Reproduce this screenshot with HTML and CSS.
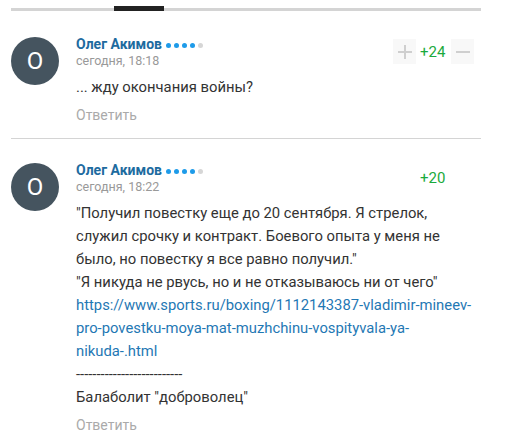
FILE: index.html
```html
<!DOCTYPE html>
<html lang="ru">
<head>
<meta charset="utf-8">
<link rel="stylesheet" href="styles.css">
</head>
<body>
<div class="wrap">
  <div class="tabs"><span class="tab-active"></span></div>

  <div class="comment">
    <div class="avatar">O</div>
    <div class="main">
      <div class="head">
        <div class="who">
          <div class="name-row">
            <span class="name">Олег Акимов</span>
            <span class="dots"><i class="on"></i><i class="on"></i><i class="on"></i><i class="on"></i><i></i></span>
          </div>
          <div class="date">сегодня, 18:18</div>
        </div>
        <div class="votes">
          <span class="vbtn"><svg width="14" height="14" viewBox="0 0 14 14"><path d="M7 0v14M0 7h14" stroke="#cfcfcf" stroke-width="2"/></svg></span>
          <span class="score">+24</span>
          <span class="vbtn"><svg width="14" height="14" viewBox="0 0 14 14"><path d="M0 7h14" stroke="#cfcfcf" stroke-width="2"/></svg></span>
        </div>
      </div>
      <div class="text">
        <p>... жду окончания войны?</p>
      </div>
      <div class="reply">Ответить</div>
    </div>
  </div>

  <div class="comment">
    <div class="avatar">O</div>
    <div class="main">
      <div class="head">
        <div class="who">
          <div class="name-row">
            <span class="name">Олег Акимов</span>
            <span class="dots"><i class="on"></i><i class="on"></i><i class="on"></i><i class="on"></i><i></i></span>
          </div>
          <div class="date">сегодня, 18:22</div>
        </div>
        <div class="votes">
          <span class="vbtn hidden"></span>
          <span class="score">+20</span>
          <span class="vbtn hidden"></span>
        </div>
      </div>
      <div class="text">
        <p>"Получил повестку еще до 20 сентября. Я стрелок, служил срочку и контракт. Боевого опыта у меня не было, но повестку я все равно получил."<br>"Я никуда не рвусь, но и не отказываюсь ни от чего"<br><a href="#">https://www.sports.ru/boxing/1112143387-vladimir-mineev-pro-povestku-moya-mat-muzhchinu-vospityvala-ya-nikuda-.html</a><br>--------------------------<br>Балаболит "доброволец"</p>
      </div>
      <div class="reply">Ответить</div>
    </div>
  </div>
</div>
</body>
</html>
```

FILE: styles.css
```css
* { box-sizing: border-box; }
html, body { margin: 0; padding: 0; background: #fff; }
body {
  font-family: Roboto, "Noto Sans", Arial, sans-serif;
  color: #333;
  padding: 6px 0 0 11px;
}
.wrap { width: 470px; }
.tabs {
  height: 5px;
  border-bottom: 3px solid #d4d4d4;
  position: relative;
}
.tab-active {
  position: absolute;
  left: 103px;
  top: 0;
  width: 50px;
  height: 5px;
  background: #222;
}
.comment {
  display: flex;
  gap: 17px;
  padding: 25px 0 0;
}
.comment + .comment {
  border-top: 1px solid #d4d4d4;
  padding-top: 23px;
}
.avatar {
  flex: none;
  width: 48px;
  height: 48px;
  border-radius: 50%;
  background: #45545f;
  color: #fff;
  font-size: 24px;
  display: flex;
  align-items: center;
  justify-content: center;
  margin-top: 1px;
}
.main { flex: 1; min-width: 0; }
.head { display: flex; justify-content: space-between; align-items: flex-start; }
.name-row { display: flex; align-items: center; gap: 4px; height: 16px; }
.name { font-weight: 700; font-size: 14px; color: #1d6b9f; }
.dots { display: flex; gap: 3px; margin-top: 3px; }
.dots i { width: 5px; height: 5px; border-radius: 50%; background: #d6d6d6; display: block; }
.dots i.on { background: #1e9be9; }
.date { font-size: 12.5px; color: #999; line-height: 17px; }
.votes { display: flex; align-items: center; gap: 4px; padding-right: 7px; margin-top: 3px; }
.vbtn {
  width: 23px; height: 25px;
  background: #f8f8f8;
  display: flex; align-items: center; justify-content: center;
}
.vbtn.hidden { visibility: hidden; }
.score { color: #1aaa3c; font-size: 15px; width: 27px; }
.text { font-size: 14.8px; line-height: 23px; color: #333; margin-top: 7px; padding-right: 7px; }
.text p { margin: 0; }
.text a { color: #1f78b4; text-decoration: none; }
.reply { font-size: 14px; color: #aaa; line-height: 20px; margin-top: 6px; padding-bottom: 13px; }
```
